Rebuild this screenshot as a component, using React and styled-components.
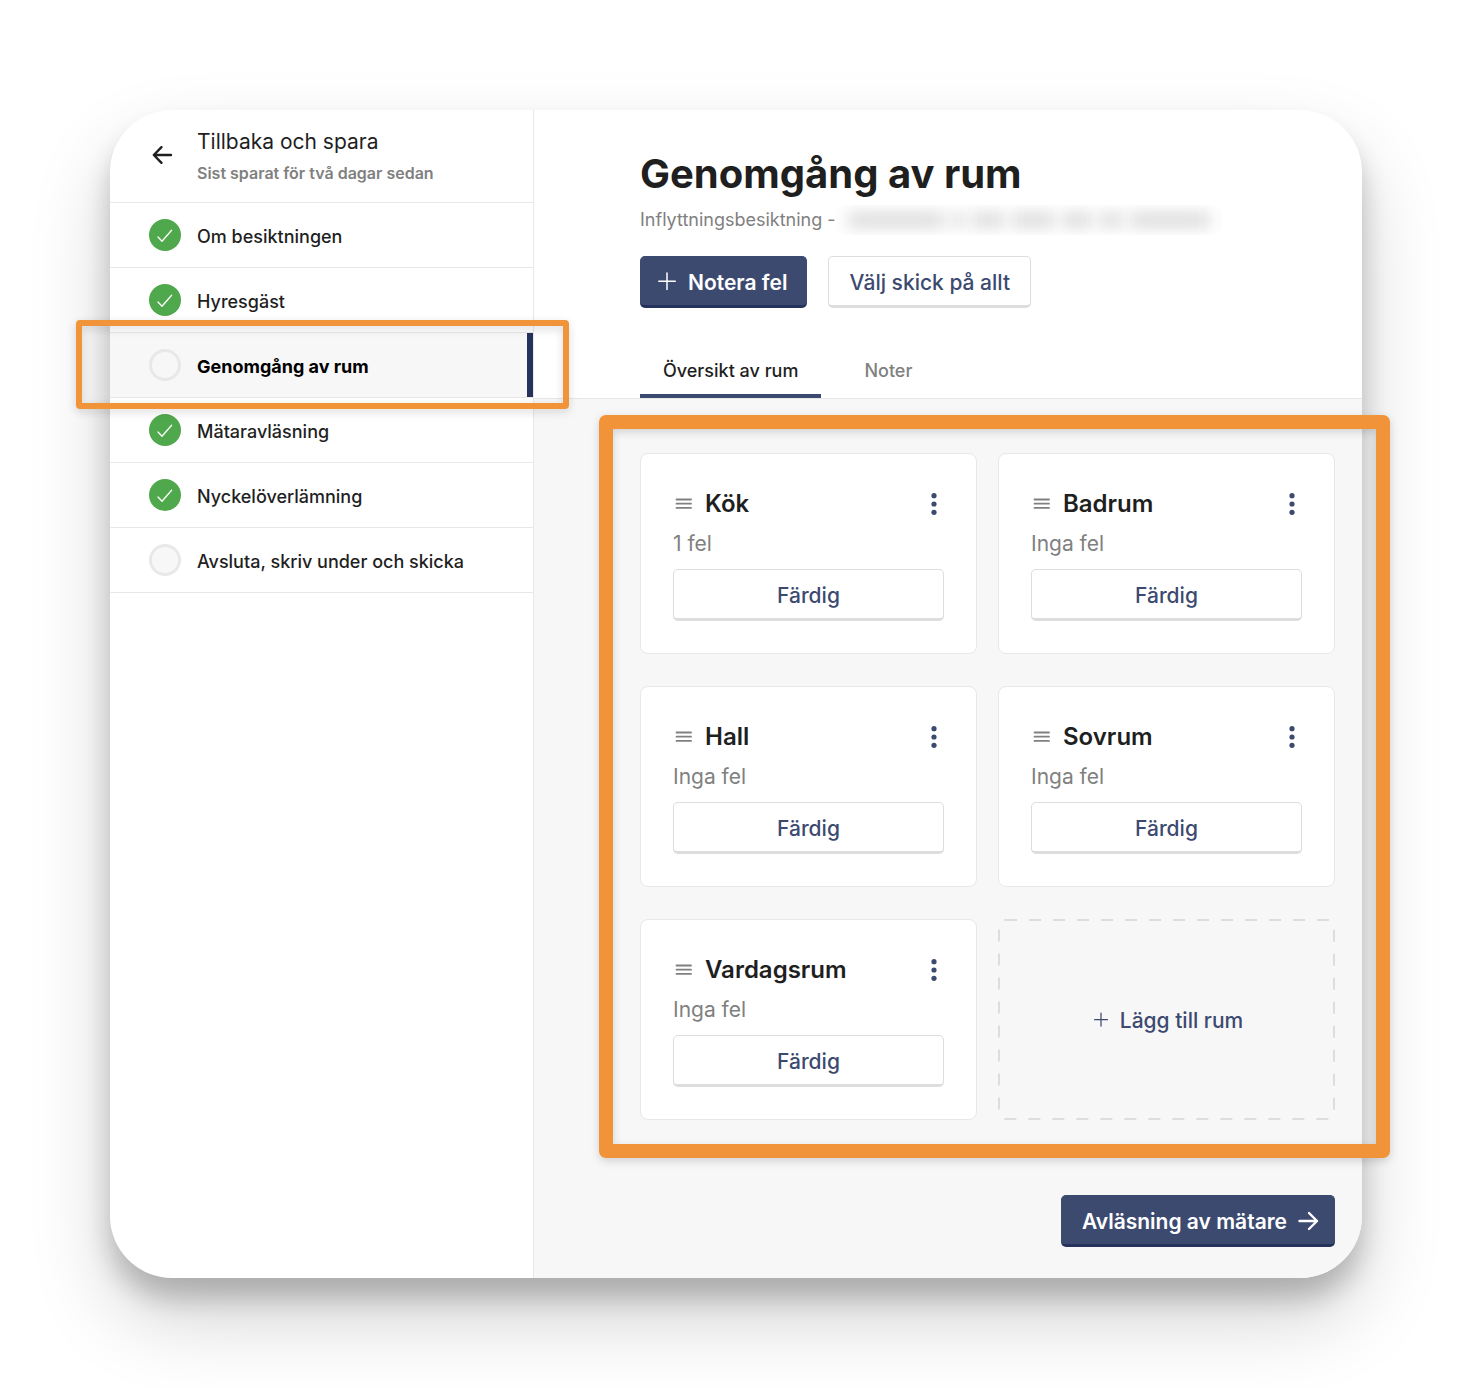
import React from "react";
import styled, { createGlobalStyle, css } from "styled-components";

const color = {
  ink: "#1f1f1f",
  muted: "#808080",
  line: "#e8e8e8",
  control: "#dddddd",
  surface: "#f7f7f7",
  navy: "#3c4a70",
  navyDark: "#25325c",
  green: "#50a84c",
  orange: "#f19338",
};

const GlobalStyle = createGlobalStyle`
  *, *::before, *::after { box-sizing: border-box; }
  body {
    margin: 0;
    background: #ffffff;
    color: ${color.ink};
    font-family: Inter, "Liberation Sans", sans-serif;
    -webkit-font-smoothing: antialiased;
  }
  button { font-family: inherit; cursor: pointer; }
  a { color: inherit; text-decoration: none; }
  h1, h2, p, ol { margin: 0; padding: 0; }
  svg { display: block; flex: none; }
`;

const Page = styled.div`
  min-height: 100vh;
  padding: 110px;
  display: flex;
  overflow: hidden;
`;

const Window = styled.div`
  flex: 1;
  min-width: 0;
  display: flex;
  border-radius: 62px;
  background: #ffffff;
  box-shadow: 0 20px 26px rgba(0, 0, 0, 0.2), 0 40px 80px rgba(0, 0, 0, 0.18);
`;

const Sidebar = styled.aside`
  flex: 0 0 424px;
  border-right: 1px solid ${color.line};
`;

const BackLink = styled.a`
  display: flex;
  align-items: center;
  gap: 24px;
  height: 93px;
  padding: 0 0 2px 41px;
  border-bottom: 1px solid ${color.line};
`;

const BackText = styled.span`
  display: flex;
  flex-direction: column;
  padding-top: 4px;
  gap: 3px;
`;

const BackTitle = styled.span`
  font-size: 21px;
  line-height: 28px;
`;

const BackNote = styled.span`
  font-size: 16px;
  line-height: 28px;
  font-weight: 600;
  color: ${color.muted};
`;

const StepList = styled.ol`
  list-style: none;
`;

const StepItem = styled.li`
  position: relative;
`;

const StepLink = styled.a`
  display: flex;
  align-items: center;
  gap: 16px;
  height: 65px;
  padding-left: 39px;
  font-size: 18px;
  line-height: 24px;
  font-weight: 500;
  border-bottom: 1px solid ${color.line};
  ${(p) =>
    p.$active &&
    css`
      color: #000000;
      font-weight: 700;
      background: ${color.surface};
      box-shadow: inset -6px 0 0 ${color.navyDark};
    `}
`;

const StepLabel = styled.span`
  padding-top: 3px;
`;

const StepMark = styled.span`
  display: grid;
  place-items: center;
  flex: none;
  width: 32px;
  height: 32px;
  border-radius: 50%;
  background: ${(p) => (p.$done ? color.green : color.surface)};
  border: ${(p) => (p.$done ? "0" : `3px solid ${color.line}`)};
`;

const Highlight = styled.span`
  position: absolute;
  z-index: 2;
  pointer-events: none;
  border: ${(p) => p.$thickness}px solid ${color.orange};
  border-radius: ${(p) => (p.$thickness > 10 ? 7 : 4)}px;
  inset: ${(p) => p.$inset};
  filter: drop-shadow(0 3px 4px rgba(0, 0, 0, 0.15));
`;

const Main = styled.main`
  flex: 1;
  min-width: 0;
  display: flex;
  flex-direction: column;
`;

const MainHeader = styled.header`
  padding: 38px 27px 0 106px;
  border-bottom: 1px solid ${color.line};
`;

const Title = styled.h1`
  font-size: 40px;
  line-height: 52px;
  font-weight: 700;
`;

const Subtitle = styled.p`
  display: flex;
  align-items: center;
  margin-top: 5px;
  font-size: 18px;
  line-height: 30px;
  color: ${color.muted};
`;

const Redacted = styled.span`
  display: flex;
  align-items: center;
  gap: 8px;
  height: 30px;
  padding: 0 12px;
  overflow: hidden;
`;

const RedactedWord = styled.span`
  width: ${(p) => p.$width}px;
  height: 14px;
  background: #d8d8d8;
  filter: blur(8px);
`;

const Actions = styled.div`
  display: flex;
  gap: 21px;
  margin-top: 21px;
`;

const Button = styled.button`
  display: flex;
  align-items: center;
  justify-content: center;
  gap: 12px;
  height: 52px;
  padding: 3px 20px 0;
  border: 1px solid ${color.control};
  border-bottom-width: 3px;
  border-radius: 5px;
  background: #ffffff;
  color: ${color.navy};
  font-size: 21px;
  line-height: 28px;
  font-weight: 500;
  ${(p) =>
    p.$primary &&
    css`
      gap: ${p.$trailingIcon ? 10 : 12}px;
      padding: 3px ${p.$trailingIcon ? 15 : 19}px 0 ${p.$trailingIcon ? 20 : 17}px;
      border-color: ${color.navy};
      border-bottom-color: ${color.navyDark};
      background: ${color.navy};
      color: #ffffff;
      font-weight: 600;
    `}
  ${(p) =>
    p.$block &&
    css`
      width: 100%;
    `}
`;

const Tabs = styled.div`
  display: flex;
  gap: 20px;
  margin-top: 34px;
`;

const Tab = styled.button`
  height: 56px;
  padding: 6px 23px 0;
  border: 0;
  border-bottom: 4px solid ${(p) => (p.$active ? color.navy : "transparent")};
  background: none;
  color: ${(p) => (p.$active ? color.ink : color.muted)};
  font-size: 18px;
  line-height: 24px;
  font-weight: 500;
`;

const Content = styled.section`
  flex: 1;
  display: flex;
  flex-direction: column;
  justify-content: space-between;
  padding: 54px 27px 31px 106px;
  background: ${color.surface};
  border-bottom-right-radius: 62px;
`;

const RoomGrid = styled.div`
  position: relative;
  display: grid;
  grid-template-columns: repeat(2, minmax(0, 1fr));
  gap: 32px 21px;
`;

const Card = styled.article`
  padding: 32px;
  border: 1px solid ${color.line};
  border-radius: 8px;
  background: #ffffff;
`;

const CardHead = styled.div`
  display: flex;
  align-items: center;
  gap: 11px;
  height: 36px;
`;

const RoomName = styled.h2`
  flex: 1;
  font-size: 24px;
  line-height: 32px;
  font-weight: 600;
`;

const MenuButton = styled.button`
  display: grid;
  place-items: center;
  width: 20px;
  height: 32px;
  padding: 0;
  border: 0;
  background: none;
  color: ${color.navy};
`;

const FaultCount = styled.p`
  padding: 6px 0 9px;
  font-size: 21px;
  line-height: 32px;
  color: ${color.muted};
`;

const AddRoom = styled.button`
  position: relative;
  display: flex;
  align-items: center;
  justify-content: center;
  gap: 12px;
  padding: 2px 0 0 4px;
  border: 0;
  background: none;
  color: ${color.navy};
  font-size: 21px;
  line-height: 28px;
  font-weight: 500;
`;

const DashedFrame = styled.svg`
  position: absolute;
  inset: 0;
  width: 100%;
  height: 100%;
  rect {
    x: 1px;
    y: 1px;
    width: calc(100% - 2px);
    height: calc(100% - 2px);
  }
`;

const Footer = styled.footer`
  display: flex;
  justify-content: flex-end;
  margin-top: 75px;
`;

const ArrowIcon = ({ back }) => (
  <svg width="22" height="22" viewBox="0 0 22 22" fill="none" stroke="currentColor" strokeWidth="2.4" strokeLinecap="round" strokeLinejoin="round" aria-hidden="true">
    {back ? <path d="M20 11H3M10.5 3.2L2.8 11l7.7 7.8" /> : <path d="M2.5 10H20M12 2l8 8-8 8" />}
  </svg>
);

const CheckIcon = () => (
  <svg width="18" height="18" viewBox="0 0 18 18" fill="none" stroke="#ffffff" strokeWidth="1.3" strokeLinecap="round" strokeLinejoin="round" aria-hidden="true">
    <path d="M2 11l4 4.200L15.600 4.200" />
  </svg>
);

const PlusIcon = ({ size, weight }) => (
  <svg width={size} height={size} viewBox="0 0 18 18" fill="none" stroke="currentColor" strokeWidth={weight} strokeLinecap="round" overflow="visible" aria-hidden="true">
    <path d="M9 -1v16.500M0.800 7.300h16.500" />
  </svg>
);

const DragIcon = () => (
  <svg width="21" height="18" viewBox="0 0 21 18" stroke={color.muted} strokeWidth="1.8" strokeLinecap="round" aria-hidden="true">
    <path d="M3.5 4.500h14.500M3.500 8.700h14.500M3.500 12.900h14.500" />
  </svg>
);

const DotsIcon = () => (
  <svg width="6" height="24" viewBox="0 0 6 24" fill="currentColor" aria-hidden="true">
    <circle cx="3" cy="3.700" r="2.600" />
    <circle cx="3" cy="12" r="2.600" />
    <circle cx="3" cy="20.300" r="2.600" />
  </svg>
);

const steps = [
  { label: "Om besiktningen", done: true },
  { label: "Hyresgäst", done: true },
  { label: "Genomgång av rum", active: true },
  { label: "Mätaravläsning", done: true },
  { label: "Nyckelöverlämning", done: true },
  { label: "Avsluta, skriv under och skicka" },
];

const rooms = [
  { name: "Kök", faults: "1 fel" },
  { name: "Badrum", faults: "Inga fel" },
  { name: "Hall", faults: "Inga fel" },
  { name: "Sovrum", faults: "Inga fel" },
  { name: "Vardagsrum", faults: "Inga fel" },
];

const redactedWords = [96, 12, 32, 42, 30, 22, 80];

const RoomCard = ({ room }) => (
  <Card>
    <CardHead>
      <DragIcon />
      <RoomName>{room.name}</RoomName>
      <MenuButton type="button" aria-label={`Meny för ${room.name}`}>
        <DotsIcon />
      </MenuButton>
    </CardHead>
    <FaultCount>{room.faults}</FaultCount>
    <Button type="button" $block>
      Färdig
    </Button>
  </Card>
);

export default function App() {
  return (
    <>
      <GlobalStyle />
      <Page>
        <Window>
          <Sidebar>
            <BackLink href="#">
              <ArrowIcon back />
              <BackText>
                <BackTitle>Tillbaka och spara</BackTitle>
                <BackNote>Sist sparat för två dagar sedan</BackNote>
              </BackText>
            </BackLink>
            <StepList>
              {steps.map((step) => (
                <StepItem key={step.label}>
                  <StepLink href="#" $active={step.active} aria-current={step.active ? "step" : undefined}>
                    <StepMark $done={step.done}>{step.done && <CheckIcon />}</StepMark>
                    <StepLabel>{step.label}</StepLabel>
                  </StepLink>
                  {step.active && <Highlight $thickness={6} $inset="-13px -36px -11px -34px" />}
                </StepItem>
              ))}
            </StepList>
          </Sidebar>
          <Main>
            <MainHeader>
              <Title>Genomgång av rum</Title>
              <Subtitle>
                Inflyttningsbesiktning -
                <Redacted aria-hidden="true">
                  {redactedWords.map((width, i) => (
                    <RedactedWord key={i} $width={width} />
                  ))}
                </Redacted>
              </Subtitle>
              <Actions>
                <Button type="button" $primary>
                  <PlusIcon size={18} weight={1.5} />
                  Notera fel
                </Button>
                <Button type="button">Välj skick på allt</Button>
              </Actions>
              <Tabs role="tablist">
                <Tab type="button" role="tab" aria-selected="true" $active>
                  Översikt av rum
                </Tab>
                <Tab type="button" role="tab" aria-selected="false">
                  Noter
                </Tab>
              </Tabs>
            </MainHeader>
            <Content>
              <RoomGrid>
                {rooms.map((room) => (
                  <RoomCard key={room.name} room={room} />
                ))}
                <AddRoom type="button">
                  <DashedFrame aria-hidden="true">
                    <rect rx="6" fill="none" stroke={color.control} strokeWidth="2" strokeDasharray="12 12" />
                  </DashedFrame>
                  <PlusIcon size={14} weight={1.6} />
                  Lägg till rum
                </AddRoom>
                <Highlight $thickness={14} $inset="-38px -55px -38px -41px" />
              </RoomGrid>
              <Footer>
                <Button type="button" $primary $trailingIcon>
                  Avläsning av mätare
                  <ArrowIcon />
                </Button>
              </Footer>
            </Content>
          </Main>
        </Window>
      </Page>
    </>
  );
}
